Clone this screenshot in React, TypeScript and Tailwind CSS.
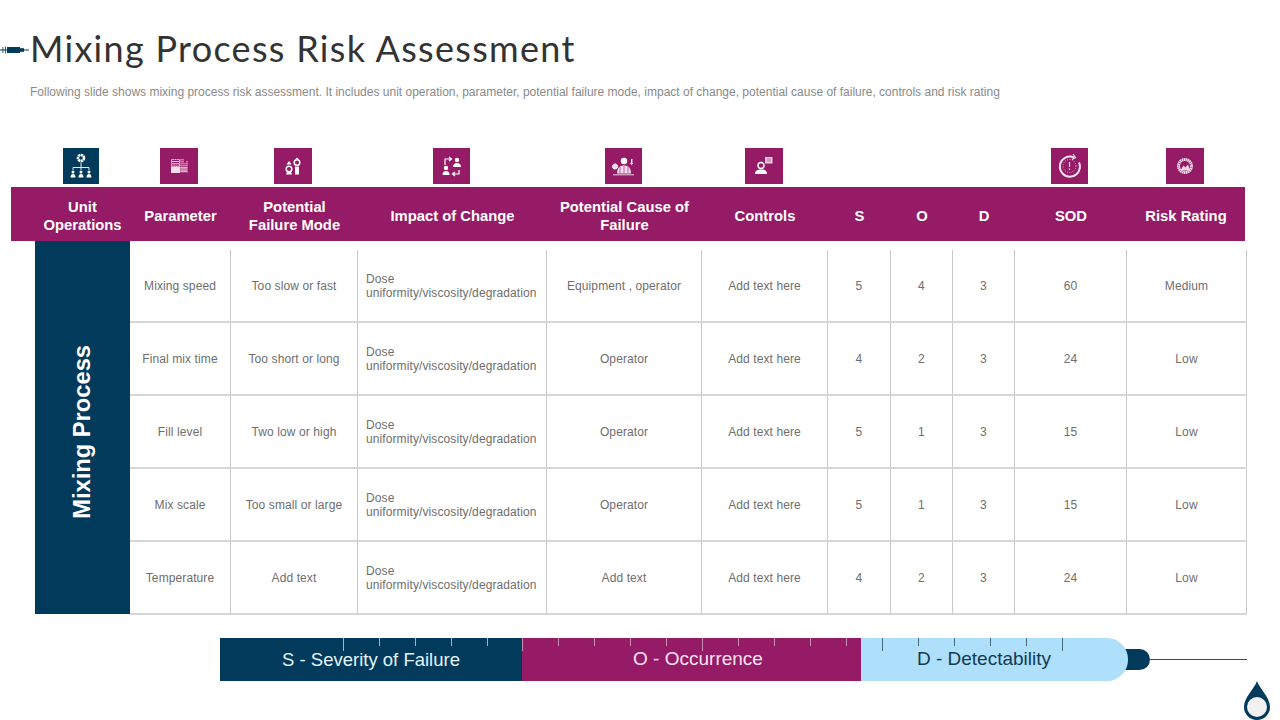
import React from "react";

const HEAD = "grid grid-cols-[95px_101px_127px_189px_155px_126px_63px_62px_62px_112px_118px]";
const ROW = "grid grid-cols-[101px_127px_189px_155px_126px_63px_62px_62px_112px_120px] h-[73px] border-b-2 border-[#d6d6d6]";

const rows = [
  ["Mixing speed", "Too slow or fast", "Equipment , operator", "5", "4", "3", "60", "Medium"],
  ["Final mix time", "Too short or long", "Operator", "4", "2", "3", "24", "Low"],
  ["Fill level", "Two low or high", "Operator", "5", "1", "3", "15", "Low"],
  ["Mix scale", "Too small or large", "Operator", "5", "1", "3", "15", "Low"],
  ["Temperature", "Add text", "Add text", "4", "2", "3", "24", "Low"],
];

const heads: [string, string?][] = [
  ["Unit", "Operations"],
  ["Parameter"],
  ["Potential", "Failure Mode"],
  ["Impact of Change"],
  ["Potential Cause of", "Failure"],
  ["Controls"],
  ["S"],
  ["O"],
  ["D"],
  ["SOD"],
  ["Risk Rating"],
];

function Hier() {
  return (
    <svg viewBox="0 0 36 36" className="w-full h-full" fill="#fff">
      <circle cx="18" cy="10" r="3" fill="none" stroke="#fff" strokeWidth="2.6" strokeDasharray="2.2 0.5" />
      <path d="M18 14.500v5M10 22v-2.500h16v2.500M18 19.500v2.500" fill="none" stroke="#fff" strokeWidth="0.900" />
      <circle cx="10" cy="24" r="1.500" /><circle cx="18" cy="24" r="1.500" /><circle cx="26" cy="24" r="1.500" />
      <path d="M7.500 29.500c0-2.500 1-3.500 2.500-3.500s2.500 1 2.500 3.500zM15.500 29.500c0-2.500 1-3.500 2.500-3.500s2.500 1 2.500 3.500zM23.500 29.500c0-2.500 1-3.500 2.500-3.500s2.500 1 2.500 3.500z" />
    </svg>
  );
}
function Param() {
  return (
    <svg viewBox="0 0 38 36" className="w-full h-full" fill="none" stroke="#f6dbe9" strokeWidth="1">
      <rect x="11.500" y="11.500" width="8" height="6.500" strokeDasharray="1.200 0.500" />
      <path d="M12 13.500h7M12 15.800h7" />
      <rect x="11.500" y="19" width="8" height="5.500" fill="#f6dbe9" />
      <path d="M21 11v14M23 11v14M25 15v10M27 13v12" strokeDasharray="1.500 0.500" />
      <path d="M20.500 20h6.500M20.500 23h6.500" />
    </svg>
  );
}
function Fail() {
  return (
    <svg viewBox="0 0 38 36" className="w-full h-full" fill="#fff">
      <circle cx="15" cy="21" r="2.800" fill="none" stroke="#fff" strokeWidth="1.500" />
      <circle cx="23" cy="14.500" r="2.800" fill="none" stroke="#fff" strokeWidth="1.500" />
      <path d="M15 13l-2.500 3.500h5zM12 26.500h6l-1-2.500h-4zM21 18.500h4v8h-4zM23 9.500l-2 2h4z" />
    </svg>
  );
}
function Impact() {
  return (
    <svg viewBox="0 0 37 36" className="w-full h-full" fill="#fff">
      <circle cx="24" cy="12" r="2.200" /><path d="M20 19c0-3 2-4 4-4s4 1 4 4z" />
      <circle cx="13" cy="20" r="2.200" /><path d="M9.500 27c0-3 1.500-4 3.500-4s3.500 1 3.500 4z" />
      <path d="M12 17v-6h6M16 9l2.500 2-2.500 2M26 22v4h-6M22 24l-2.500 2 2.500 2" fill="none" stroke="#fff" strokeWidth="1.200" />
    </svg>
  );
}
function Cause() {
  return (
    <svg viewBox="0 0 37 36" className="w-full h-full" fill="#fff">
      <circle cx="19" cy="13" r="3.200" /><path d="M12 25.500c0-6 3-8 7-8s7 2 7 8z" fill="#f6dbe9" />
      <path d="M15 19v6M23 19v6M19 18v7" stroke="#951b66" strokeWidth="0.600" />
      <circle cx="10" cy="18.500" r="2.600" fill="#f6dbe9" stroke="#fff" strokeDasharray="1.500 0.500" />
      <path d="M26 11h1.400v4H26zM25 15h3.400l-1.700 2z" />
      <path d="M8 26.800h21" stroke="#fff" strokeWidth="0.800" />
    </svg>
  );
}
function Ctrl() {
  return (
    <svg viewBox="0 0 38 36" className="w-full h-full" fill="#fff">
      <rect x="20" y="9" width="7.500" height="6.500" fill="#f3cfe2" />
      <path d="M21.500 11h4.500M21.500 13h4.500" stroke="#951b66" strokeWidth="0.600" />
      <circle cx="16" cy="17.500" r="3" fill="none" stroke="#fff" strokeWidth="1.400" />
      <path d="M10 26c0-3.500 2.500-4.500 6-4.500s6 1 6 4.500z" />
    </svg>
  );
}
function Sod() {
  return (
    <svg viewBox="0 0 37 36" className="w-full h-full" fill="none" stroke="#f6e3ee">
      <path d="M28 14.500a10 10 0 1 1-5-5" strokeWidth="2" />
      <path d="M22 6l2.500 3.500-3.500 2" strokeWidth="1.200" />
      <circle cx="18.500" cy="18" r="6.500" strokeWidth="0.800" strokeDasharray="0.800 1.500" />
      <path d="M18.500 14v5M18.500 20.500v1.500" strokeWidth="1.200" />
    </svg>
  );
}
function Risk() {
  return (
    <svg viewBox="0 0 38 36" className="w-full h-full" fill="none">
      <circle cx="19" cy="18" r="6.500" stroke="#f3d7e6" strokeWidth="3" strokeDasharray="1.500 0.400" />
      <path d="M14.500 22.500l3-5 2 2 2.500-3 2 6z" fill="#f3d7e6" />
    </svg>
  );
}

function Ticks({ color, className, long, count }: { color: string; className: string; long: number[]; count: number }) {
  return (
    <div className={`absolute top-0 flex ${className}`}>
      {Array.from({ length: count }).map((_, i) => (
        <span key={i} className={`w-px ${color} ${long.includes(i) ? "h-[13px]" : "h-[8px]"}`} />
      ))}
    </div>
  );
}

function Cell({ children, left }: { children: React.ReactNode; left?: boolean }) {
  return (
    <div className={`flex items-center border-r border-[#c9c9c9] text-[12px] leading-[14px] tracking-[0.1px] text-[#6e6e6e] ${left ? "pl-2 text-left" : "justify-center text-center"}`}>
      <span>{children}</span>
    </div>
  );
}

function Box({ className, children }: { className: string; children: React.ReactNode }) {
  return <div className={`h-[36px] shrink-0 ${className}`}>{children}</div>;
}

export default function App() {
  return (
    <div className="relative w-[1280px] h-[720px] overflow-hidden bg-white font-['Liberation_Sans',Arial,sans-serif]">
      <div className="flex items-center h-[50px] mt-[23px]">
        <svg viewBox="0 0 30 12" className="w-[30px] h-[12px] mt-[4px]" fill="#013a5b">
          <path d="M0 5.500h29v1H0z" />
          <path d="M2.500 3h.8v6h-.8zM5 2.500h.8v7H5z" />
          <rect x="7" y="3" width="13" height="6" />
          <rect x="20" y="4.200" width="4" height="3.600" />
        </svg>
        <h1 className="font-['Lato',sans-serif] font-normal text-[36px] leading-[50px] tracking-[1.300px] text-[#333333]">Mixing Process Risk Assessment</h1>
      </div>
      <p className="ml-[30px] mt-[11px] h-[16px] text-[12px] leading-[16px] text-[#8a8a8a]">
        Following slide shows mixing process risk assessment. It includes unit operation, parameter, potential failure mode, impact of change, potential cause of failure, controls and risk rating
      </p>

      <div className="flex ml-[63px] mt-[48px] h-[36px]">
        <Box className="w-[36px] bg-[#013a5b]"><Hier /></Box>
        <Box className="w-[38px] ml-[61px] bg-[#951b66]"><Param /></Box>
        <Box className="w-[38px] ml-[76px] bg-[#951b66]"><Fail /></Box>
        <Box className="w-[37px] ml-[121px] bg-[#951b66]"><Impact /></Box>
        <Box className="w-[37px] ml-[135px] bg-[#951b66]"><Cause /></Box>
        <Box className="w-[38px] ml-[103px] bg-[#951b66]"><Ctrl /></Box>
        <Box className="w-[37px] ml-[268px] bg-[#951b66]"><Sod /></Box>
        <Box className="w-[38px] ml-[78px] bg-[#951b66]"><Risk /></Box>
      </div>

      <div className={`${HEAD} ml-[11px] pl-[24px] pt-[3px] mt-[3px] w-[1234px] h-[54px] bg-[#951b66]`}>
        {heads.map((h, i) => (
          <div key={i} className="flex flex-col items-center justify-center text-center text-white font-bold text-[14.800px] leading-[18px]">
            <span>{h[0]}</span>
            {h[1] && <span>{h[1]}</span>}
          </div>
        ))}
      </div>

      <div className="flex ml-[35px]">
        <div className="flex items-center justify-center w-[95px] h-[373px] pt-[8px] bg-[#013a5b]">
          <span className="rotate-180 [writing-mode:vertical-rl] text-white font-bold text-[23.700px] leading-none">Mixing Process</span>
        </div>
        <div className="pt-[9px] w-[1117px]">
          {rows.map((r, i) => (
            <div key={i} className={`${ROW} ${i === 4 ? "border-[#b98aa9]" : ""}`}>
              <Cell>{r[0]}</Cell>
              <Cell>{r[1]}</Cell>
              <Cell left>
                Dose
                <br />
                uniformity/viscosity/degradation
              </Cell>
              <Cell>{r[2]}</Cell>
              <Cell>Add text here</Cell>
              <Cell>{r[3]}</Cell>
              <Cell>{r[4]}</Cell>
              <Cell>{r[5]}</Cell>
              <Cell>{r[6]}</Cell>
              <Cell>{r[7]}</Cell>
            </div>
          ))}
        </div>
      </div>

      <div className="flex items-center ml-[220px] mt-[23px] h-[43px]">
        <div className="relative flex items-center justify-center w-[302px] h-full bg-[#013a5b] text-[18.500px] text-[#e4f4fd]">
          <Ticks color="bg-[#9fb6c5]" className="left-[123px] gap-[35px]" long={[0]} count={5} />
          S - Severity of Failure
        </div>
        <div className="relative flex items-center justify-center w-[339px] h-full pl-[13px] bg-[#951b66] text-[19px] text-[#fbe3f1]">
          <Ticks color="bg-[#c98db2]" className="left-0 gap-[35px]" long={[0, 5]} count={10} />
          O - Occurrence
        </div>
        <div className="relative z-10 flex items-center justify-center w-[267px] h-full pr-[21px] rounded-r-[21px] bg-[#aee0fc] text-[19px] text-[#123a55]">
          <Ticks color="bg-[#48697f]" className="left-[21px] gap-[35px]" long={[0, 5]} count={6} />
          D - Detectability
        </div>
        <div className="w-[25px] h-[21px] -ml-[3px] rounded-r-full bg-[#013a5b]" />
        <div className="w-[97px] h-px bg-[#2c4e66]" />
      </div>

      <svg viewBox="0 0 26 40" className="absolute left-[1244px] top-[680px] w-[26px] h-[40px]">
        <path d="M13 1C11 8 0 17 0 27a13 13 0 0 0 26 0C26 17 15 8 13 1z" fill="#013a5b" />
        <circle cx="13" cy="27" r="10" fill="#f1f1f1" />
      </svg>
    </div>
  );
}
